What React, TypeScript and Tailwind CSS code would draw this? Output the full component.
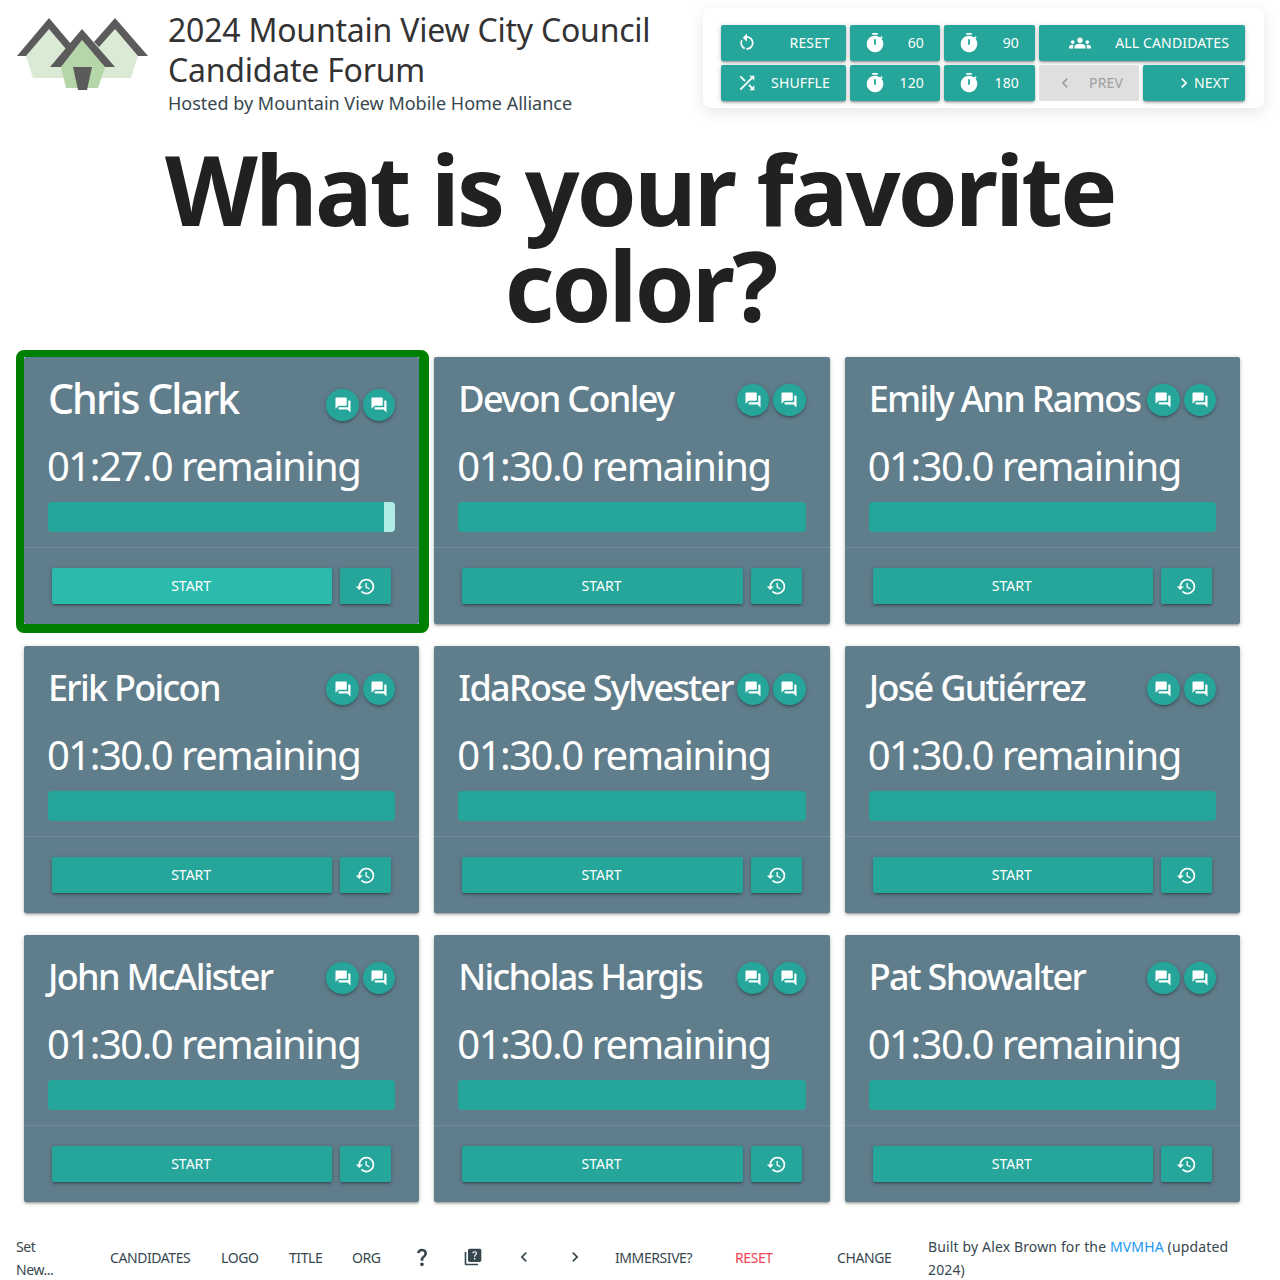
import React from "react";
import {
  MdChevronLeft,
  MdChevronRight,
  MdForum,
  MdGroups,
  MdHistory,
  MdQuestionMark,
  MdQuiz,
  MdShuffle,
  MdTimer,
} from "react-icons/md";

const shadow =
  "shadow-[0_2px_2px_0_rgba(0,0,0,0.14),0_3px_1px_-2px_rgba(0,0,0,0.12),0_1px_5px_0_rgba(0,0,0,0.2)]";

const candidates = [
  "Chris Clark",
  "Devon Conley",
  "Emily Ann Ramos",
  "Erik Poicon",
  "IdaRose Sylvester",
  "José Gutiérrez",
  "John McAlister",
  "Nicholas Hargis",
  "Pat Showalter",
];

const RestartIcon = () => (
  <svg viewBox="0 0 24 24" className="w-5 h-5 ml-[2px]" fill="currentColor">
    <path d="M12,4C14.1,4 16.1,4.8 17.6,6.3C20.7,9.4 20.7,14.5 17.6,17.6C15.8,19.5 13.3,20.2 10.9,19.9L11.4,17.9C13.1,18.1 14.9,17.5 16.2,16.2C18.5,13.9 18.5,10.1 16.2,7.7C15.1,6.6 13.5,6 12,6V10.6L7,5.6L12,0.6V4M6.3,17.6C3.7,15 3.3,11 5.1,7.9L6.6,9.4C5.5,11.6 5.9,14.4 7.8,16.2C8.3,16.7 8.9,17.1 9.6,17.4L9,19.4C8,19 7.1,18.4 6.3,17.6Z" />
  </svg>
);

const Logo = () => (
  <svg viewBox="16 16 134 76" className="w-[134px] h-[76px] shrink-0">
    <polygon points="26,56 49,28 82,60 115,28 138,56 131,78 33,78" fill="#dbead5" />
    <polygon points="61,67 82,40 105,67 98,88 66,88" fill="#b5d6a8" />
    <polygon points="17,56 49,18 71,44 66,49 49,29 26,56" fill="#5b5b5b" />
    <polygon points="148,56 115,18 94,42 99,47 115,29 138,56" fill="#5b5b5b" />
    <polygon points="50,67 82,29 115,67 105,67 82,40 61,67" fill="#5b5b5b" />
    <polygon points="73,67 92,67 87,90 78,90" fill="#5b5b5b" />
  </svg>
);

interface ToolButtonProps {
  icon: React.ReactNode;
  label: string;
  width: string;
  disabled?: boolean;
}

const ToolButton: React.FC<ToolButtonProps> = ({ icon, label, width, disabled }) => (
  <button
    className={`${width} h-9 pl-[14px] pr-4 rounded-[2px] flex items-center justify-between text-sm uppercase tracking-[0.01em] ${
      disabled ? "bg-[#dfdfdf] text-[#9f9f9f]" : `bg-[#26a69a] text-white ${shadow}`
    }`}
  >
    {icon}
    <span>{label}</span>
  </button>
);

const CandidateCard: React.FC<{ name: string; active?: boolean }> = ({ name, active }) => (
  <div className={`relative h-[267px] bg-[#607d8b] rounded-[2px] text-white flex flex-col ${shadow}`}>
    {active && (
      <div className="absolute -left-2 -top-[7px] -right-[10px] -bottom-[9px] border-[#008000] border-l-8 border-r-[10px] border-t-[7px] border-b-[9px] rounded-lg" />
    )}
    <div className="px-6 pt-[17px] flex-1">
      <div className="flex justify-between items-start h-[49px]">
        <span
          className={`leading-[49px] whitespace-nowrap font-medium tracking-[-0.047em] ${
            active ? "text-[41px]" : "text-[36px]"
          }`}
        >
          {name}
        </span>
        <div className={`flex gap-1 shrink-0 ${active ? "mt-[15px]" : "mt-[10px]"}`}>
          {[0, 1].map((i) => (
            <span
              key={i}
              className={`w-[32.5px] h-8 rounded-full bg-[#26a69a] flex items-center justify-center ${shadow}`}
            >
              <MdForum size={18} />
            </span>
          ))}
        </div>
      </div>
      <div className="text-[40px] leading-[48px] mt-[19px] -ml-px whitespace-nowrap tracking-[-0.038em]">
        01:{active ? "27" : "30"}.0 remaining
      </div>
      <div className="h-[30px] mt-[12px] rounded-[4px] bg-[#26a69a] overflow-hidden flex justify-end">
        {active && <div className="w-[11px] bg-[#b0ece5]" />}
      </div>
    </div>
    <div className="h-[77px] border-t border-white/10 px-7 flex items-center gap-2">
      <button
        className={`flex-1 h-9 pr-[2px] rounded-[2px] text-sm uppercase ${active ? "bg-[#2bbbad]" : "bg-[#26a69a]"} ${shadow}`}
      >
        Start
      </button>
      <button className={`w-[51px] h-9 rounded-[2px] bg-[#26a69a] flex items-center justify-center ${shadow}`}>
        <MdHistory size={21} />
      </button>
    </div>
  </div>
);

const App: React.FC = () => {
  return (
    <div className="h-[1280px] overflow-hidden bg-white text-[#212121] font-['Noto_Sans',sans-serif]">
      <header className="flex justify-between pr-4">
        <div className="flex pl-4 pt-4 gap-[18px]">
          <Logo />
          <div className="-mt-[6px] text-[#37474f]">
            <h2 className="text-[32px] leading-[40px] tracking-[-0.007em] text-[#333333]">
              2024 Mountain View City Council
              <br />
              Candidate Forum
            </h2>
            <p className="text-[18px] leading-[28px] -mt-px">Hosted by Mountain View Mobile Home Alliance</p>
          </div>
        </div>
        <div className="mt-2 w-[561px] h-[100px] rounded-lg bg-white px-[18px] pt-[17px] flex flex-col gap-1 shadow-[0_4px_16px_rgba(0,0,0,0.1)]">
          <div className="flex gap-1">
            <ToolButton icon={<RestartIcon />} label="Reset" width="w-[125px]" />
            <ToolButton icon={<MdTimer size={22} />} label="60" width="w-[90px]" />
            <ToolButton icon={<MdTimer size={22} />} label="90" width="w-[91px]" />
            <ToolButton icon={<MdGroups size={22} className="ml-[16px]" />} label="All Candidates" width="w-[206px]" />
          </div>
          <div className="flex gap-1">
            <ToolButton icon={<MdShuffle size={22} className="ml-px" />} label="Shuffle" width="w-[125px]" />
            <ToolButton icon={<MdTimer size={22} />} label="120" width="w-[90px]" />
            <ToolButton icon={<MdTimer size={22} />} label="180" width="w-[91px]" />
            <ToolButton icon={<MdChevronLeft size={20} className="ml-[2px]" />} label="Prev" width="w-[100px]" disabled />
            <ToolButton icon={<MdChevronRight size={20} />} label="Next" width="w-[102px] !justify-end" />
          </div>
        </div>
      </header>

      <h1 className="mt-[24px] text-center text-[96px] leading-[96px] font-bold tracking-[-0.028em]">
        What is your favorite
        <br />
        color?
      </h1>

      <main className="mt-[24px] pl-6 pr-10 grid grid-cols-3 gap-x-[15px] gap-y-[22px]">
        {candidates.map((name, i) => (
          <CandidateCard key={name} name={name} active={i === 0} />
        ))}
      </main>

      <footer className="mt-[32px] pl-4 h-[46px] flex items-center text-sm leading-[23px] text-[#37474f] tracking-[-0.03em]">
        <span className="w-[94px] mt-[2px]">
          Set
          <br />
          New...
        </span>
        <span className="w-[111px]">CANDIDATES</span>
        <span className="w-[68px]">LOGO</span>
        <span className="w-[63px]">TITLE</span>
        <span className="w-[59px]">ORG</span>
        <span className="w-[52px]">
          <MdQuestionMark size={22} />
        </span>
        <span className="w-[51px]">
          <MdQuiz size={20} />
        </span>
        <span className="w-[51px]">
          <MdChevronLeft size={20} />
        </span>
        <span className="w-[50px]">
          <MdChevronRight size={20} />
        </span>
        <span className="w-[120px]">IMMERSIVE?</span>
        <span className="w-[102px] text-[#f44356]">RESET</span>
        <span className="w-[91px]">CHANGE</span>
        <span className="w-[310px] mt-[2px] tracking-[0.01em]">
          Built by Alex Brown for the <span className="text-[#2196f3]">MVMHA</span> (updated 2024)
        </span>
      </footer>
    </div>
  );
};

export default App;
